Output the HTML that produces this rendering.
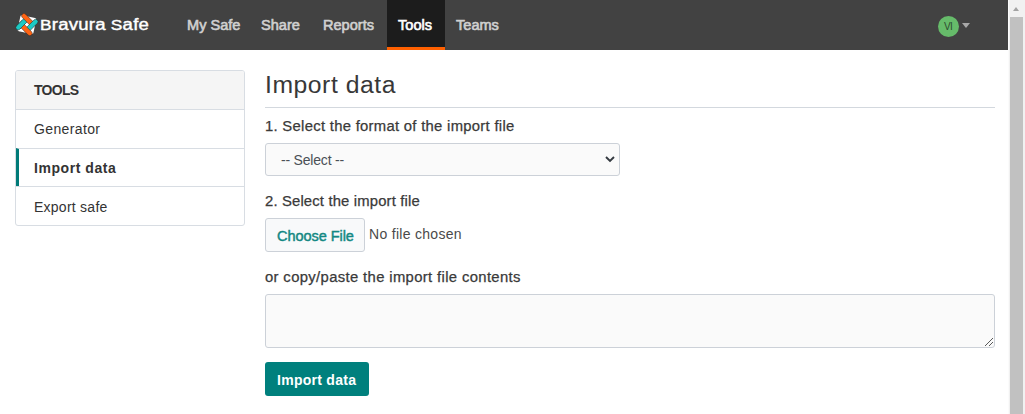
<!DOCTYPE html>
<html><head><meta charset="utf-8">
<style>
*{box-sizing:border-box;margin:0;padding:0}
html,body{width:1025px;height:414px;overflow:hidden;background:#fff}
body{font-family:"Liberation Sans",sans-serif;font-size:14px;color:#333;position:relative}
.abs{position:absolute;white-space:nowrap}
#nav{position:absolute;left:0;top:0;width:1008px;height:50px;background:#424242}
.ni{position:absolute;top:0;height:50px;line-height:50px;color:#d0d0d0;font-size:14px}
.ni span{display:inline-block;-webkit-text-stroke:0.6px currentColor;transform:scaleX(1.04);transform-origin:0 0}
.act{background:#1c1c1c;color:#fff}
.act:after{content:"";position:absolute;left:0;right:0;bottom:0;height:3px;background:#ff6000}
#sb{position:absolute;left:1008px;top:0;width:17px;height:414px;background:#f1f1f1;border-left:1px solid #fbfbfb}
#thumb{position:absolute;left:1px;top:17px;width:13px;height:420px;background:#c1c1c1}
#panel{position:absolute;left:15px;top:70px;width:230px;height:156px;border:1px solid #d8dde3;border-radius:3px;overflow:hidden}
.row{position:absolute;left:0;width:228px;border-top:1px solid #d8dde3}
.semi{color:#3a3a3a;-webkit-text-stroke:0.25px #3a3a3a;font-size:14px;transform:scaleX(1.06);transform-origin:0 0}
</style></head><body>
<div id="nav">
  <svg class="abs" style="left:14px;top:12px" width="26" height="26" viewBox="0 0 26 26">
    <defs><clipPath id="cb"><rect x="-7.5" y="0.3" width="7" height="8"/></clipPath></defs>
    <rect x="-8.1" y="-8.1" width="16.2" height="16.2" rx="1.5" fill="#fff" transform="translate(12.9,12.6) rotate(12)"/>
    <g transform="translate(12.9,12.6) rotate(45)" stroke="#262626" stroke-width="0.5">
      <rect x="-6.449999999999999" y="-6.15" width="4.7" height="16.8" rx="2.35" fill="#1cc9c3"/>
      <rect x="-10.65" y="-6.449999999999999" width="16.8" height="4.7" rx="2.35" fill="#ff6414"/>
      <rect x="1.7499999999999996" y="-10.65" width="4.7" height="16.8" rx="2.35" fill="#1cc9c3"/>
      <rect x="-6.15" y="1.7499999999999996" width="16.8" height="4.7" rx="2.35" fill="#ff6414"/>
      <rect x="-6.449999999999999" y="-6.15" width="4.7" height="16.8" rx="2.35" fill="#1cc9c3" clip-path="url(#cb)"/>
    </g>
  </svg>
  <div class="abs" style="left:40px;top:14.6px;color:#fff;font-size:14.5px;line-height:20px;-webkit-text-stroke:0.4px #fff;transform:scaleX(1.19);transform-origin:0 0;letter-spacing:0.2px">B<span style="font-size:15.6px">ravura</span> S<span style="font-size:15.6px">afe</span></div>
  <div class="ni" style="left:176px;width:74px;padding-left:11px"><span>My Safe</span></div>
  <div class="ni" style="left:250px;width:61px;padding-left:11px"><span>Share</span></div>
  <div class="ni" style="left:312px;width:75px;padding-left:11px"><span>Reports</span></div>
  <div class="ni act" style="left:387px;width:58px;padding-left:11px"><span>Tools</span></div>
  <div class="ni" style="left:445px;width:66px;padding-left:11px"><span>Teams</span></div>
  <div class="abs" style="left:937.5px;top:15.5px;width:21.5px;height:21.5px;border-radius:50%;background:#66bb6a;color:#2f4a30;font-size:10px;line-height:22px;text-align:center;letter-spacing:-0.6px;text-indent:-0.3px">VI</div>
  <div class="abs" style="left:961.7px;top:23px;width:0;height:0;border-left:4.65px solid transparent;border-right:4.65px solid transparent;border-top:5.2px solid #a8a8a8"></div>
</div>
<div id="sb"><div class="abs" style="left:3.9px;top:7px;width:0;height:0;border-left:3.6px solid transparent;border-right:3.6px solid transparent;border-bottom:4px solid #a3a3a3"></div><div id="thumb"></div></div>

<div id="panel">
  <div class="row" style="top:0;height:39px;border-top:0;background:#f5f5f5"></div>
  <div class="row" style="top:38px;height:39px"></div>
  <div class="row" style="top:77px;height:39px;border-left:3px solid #007b78"></div>
  <div class="row" style="top:115px;height:40px"></div>
</div>
<div class="abs" style="left:34px;top:80px;line-height:20px;font-weight:bold;letter-spacing:-0.7px">TOOLS</div>
<div class="abs" style="left:34px;top:119px;line-height:20px;letter-spacing:0.37px">Generator</div>
<div class="abs" style="left:34px;top:158px;line-height:20px;font-weight:bold;letter-spacing:0.55px">Import data</div>
<div class="abs" style="left:34px;top:197px;line-height:20px;letter-spacing:0.25px">Export safe</div>

<div class="abs" style="left:265px;top:71.3px;font-size:23px;line-height:28px;color:#383838;letter-spacing:0.5px;transform:scaleX(1.075);transform-origin:0 0">Import data</div>
<div class="abs" style="left:265px;top:107px;width:730px;height:1px;background:#d3d8de"></div>
<div class="semi abs" style="left:265px;top:116px;line-height:20px;letter-spacing:0.27px">1. Select the format of the import file</div>
<div class="abs" style="left:265px;top:143px;width:355px;height:33px;border:1px solid #ccd1d8;border-radius:3px;background:#fafafa">
  <div class="abs" style="left:15px;top:1px;line-height:31px;color:#4a5056;letter-spacing:-0.2px">-- Select --</div>
  <svg class="abs" style="left:338px;top:11px" width="12" height="9" viewBox="0 0 12 9"><path d="M2 2 L6 6 L10 2" stroke="#343a40" stroke-width="1.9" fill="none"/></svg>
</div>
<div class="semi abs" style="left:265px;top:191px;line-height:20px;letter-spacing:0.145px">2. Select the import file</div>
<div class="abs" style="left:265px;top:218px;width:100px;height:34px;border:1px solid #ccd1d8;border-radius:3px;background:#f8f9fa"></div>
<div class="abs" style="left:277px;top:225.5px;line-height:20px;font-size:14.5px;color:#138883;-webkit-text-stroke:0.45px #138883;letter-spacing:-0.05px">Choose File</div>
<div class="abs" style="left:369px;top:224px;line-height:20px;color:#4a4a4a;letter-spacing:0.3px">No file chosen</div>
<div class="semi abs" style="left:265px;top:267px;line-height:20px;letter-spacing:0.33px">or copy/paste the import file contents</div>
<div class="abs" style="left:265px;top:294px;width:730px;height:54px;border:1px solid #ccd1d8;border-radius:3px;background:#fafafa"></div>
<svg class="abs" style="left:983px;top:336px" width="12" height="12" viewBox="0 0 12 12"><path d="M2 10 L10 2 M6 10 L10 6" stroke="#5a5a5a" stroke-width="1"/></svg>
<div class="abs" style="left:265px;top:362px;width:104px;height:34px;border-radius:3px;background:#00807d"></div>
<div class="abs" style="left:277px;top:370px;line-height:20px;color:#fff;font-weight:bold;letter-spacing:0.27px">Import data</div>
</body></html>
